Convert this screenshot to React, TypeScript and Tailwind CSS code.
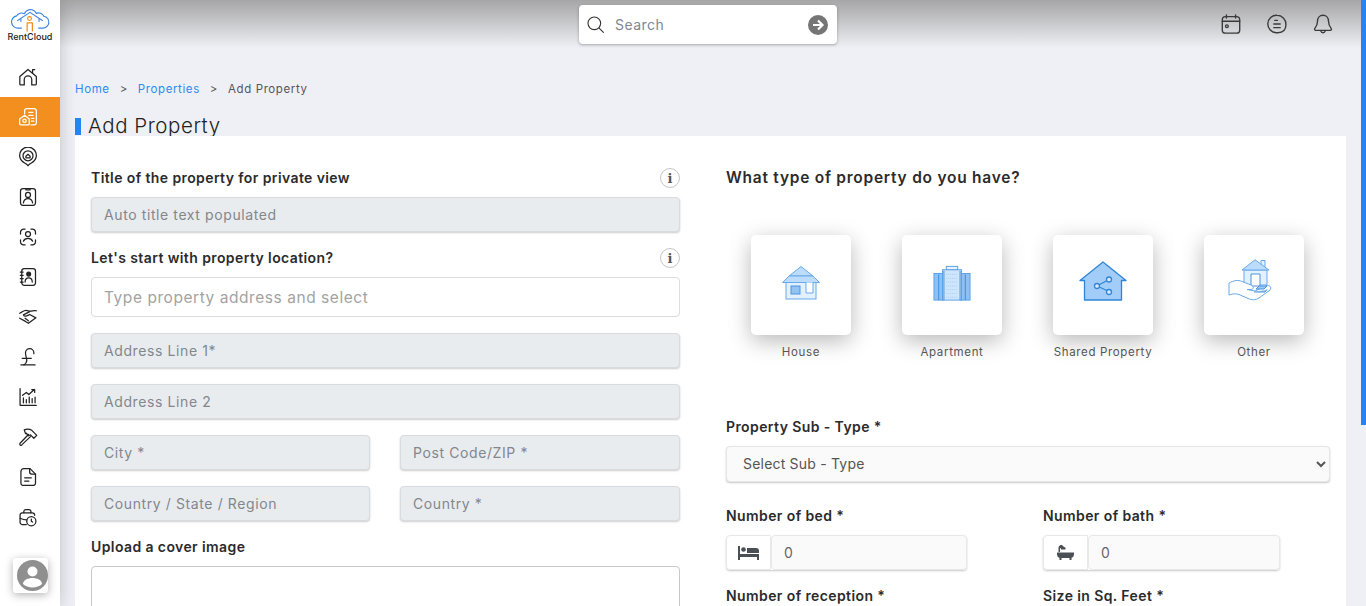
import React from "react";

const I = ({ children, size = 22, cls = "text-[#222]", sw = 1.5 }: { children: React.ReactNode; size?: number; cls?: string; sw?: number }) => (
  <svg width={size} height={size} viewBox="0 0 24 24" fill="none" stroke="currentColor" strokeWidth={sw} strokeLinecap="round" strokeLinejoin="round" className={cls}>
    {children}
  </svg>
);

const navIcons: React.ReactNode[] = [
  <><path d="M3 21.500h4.500V15a4.500 4.500 0 0 1 9 0v6.500H21a1 1 0 0 0 1-1V11.500L12 3 2.200 11.500v9a1 1 0 0 0 .8 1z" /><path d="M17.500 7V3.200H20" /></>,
  <><path d="M3 21.500h9.500a1 1 0 0 0 1-1v-6L8 10 2 14.500v6a1 1 0 0 0 1 1z" /><circle cx="7.800" cy="16.500" r="2" /><path d="M8 8V4.500A2.500 2.500 0 0 1 10.500 2H19a3 3 0 0 1 3 3v14a2.500 2.500 0 0 1-2.500 2.500h-4" /><path d="M13 6.500h5M13 10h5M16 13.500h3M16 17h3" /></>,
  <><path d="M12 22.500c-1-1.600-2.200-2.400-4-3.300a10 10 0 1 1 8 0c-1.800.9-3 1.700-4 3.300z" /><circle cx="12" cy="10.500" r="6" /><path d="M9.500 11 12 8.800l2.500 2.200v2H9.500z" /></>,
  <><rect x="3" y="2" width="18" height="20" rx="3" /><circle cx="12" cy="9.500" r="3" /><path d="M6.500 19c.5-3.500 2.700-5 5.500-5s5 1.500 5.500 5" /><path d="M9.500 2v1.500h5V2" /></>,
  <><path d="M3 8.500V6.500A4 4 0 0 1 7 2.500h1.500M15.500 2.500H17a4 4 0 0 1 4 4v2M3 15.500v2a4 4 0 0 0 4 4h1.500M21 15.500v2a4 4 0 0 1-4 4h-1.500" /><circle cx="12" cy="8.500" r="3" /><path d="M6.500 17c1-2.500 3-3.500 5.500-3.500s4.500 1 5.500 3.500" /></>,
  <><rect x="4.500" y="2" width="16.500" height="20" rx="3" /><path d="M2.800 6h3.400M2.800 10h3.400M2.800 14h3.400M2.800 18h3.400" /><circle cx="12.800" cy="8.500" r="2.300" fill="currentColor" /><path d="M8.500 18c0-3.500 1.800-5 4.300-5s4.300 1.500 4.300 5" /></>,
  <><path d="M2 7.500c3-1 4.500-3.500 7.500-3.500 2 0 3.500 1 5 1 2.500 0 5-1.500 7.500-.5" /><path d="M14 5.500 6.500 9.500c1 2 3.500 2 5.500.5l2-1 7.500 4-9 6.500-4-2.500L2 13.500" /><path d="M8.500 13.500l4 3" /></>,
  <><path d="M19 8V7a5 5 0 0 0-10 0c0 4 1.500 6 1.500 9 0 2-1 4-3.500 5.500" /><path d="M5 13.500h11" /><path d="M3.500 21.500h17" /></>,
  <><path d="M2.500 2v20h19.500" /><path d="M6.500 19v-6M10 19v-4M13.500 19v-7M17 19v-5M20.500 19v-7" /><path d="M5.500 10l4.500-3.500 3 2.500 6.500-6M16.500 3H20v3.500" /></>,
  <><path d="M12.500 9 2.500 19.500a1.500 1.500 0 0 0 0 2 1.500 1.500 0 0 0 2 0L15 11.500" /><path d="M7.500 3.500c3-1.500 6-1.500 9 .5l6 6-3.500 3.500-4-4-2.500 1-2.500-3-1 .5z" /></>,
  <><path d="M5.500 22h13a2.500 2.500 0 0 0 2.500-2.500V8.500L14.500 2H7a3.500 3.500 0 0 0-3.500 3.500v14A2.500 2.500 0 0 0 5.500 22z" /><path d="M14 2.500V6a2.500 2.500 0 0 0 2.500 2.500H21" /><path d="M8 13h8M8 17h5" /></>,
  <><path d="M10 21H5a2.500 2.500 0 0 1-2.500-2.500V9.500A2.500 2.500 0 0 1 5 7h12a3 3 0 0 1 3 3" /><path d="M7 7V5.500a2.500 2.500 0 0 1 2.500-2.500h3.500A2.500 2.500 0 0 1 15.500 5.500V7" /><path d="M2.500 13.500c3 1.500 5.500 2 8 2" /><circle cx="16" cy="17" r="5.500" /><path d="M16 14.500V17l1.500 1" /></>,
];

const Logo = () => (
  <svg width="40" height="25" viewBox="0 0 42 26" fill="none" strokeLinecap="round" strokeLinejoin="round">
    <path d="M12 21H8a6.500 6.500 0 0 1-1-12.900 6 6 0 0 1 8-2.300A8 8 0 0 1 21 1.500a7.500 7.500 0 0 1 6.500 4 6 6 0 0 1 8 3 6.300 6.300 0 0 1-1.500 12.500h-4" stroke="#3b82e8" strokeWidth="1.200" />
    <path d="M8 13 21 4.500 34 13M11.500 11.500V14M30.500 11.500V14" stroke="#3b82e8" strokeWidth="1.100" />
    <circle cx="20.500" cy="11" r="2" stroke="#f28c1e" strokeWidth="1.200" />
    <path d="M18 24v-8.500h5.500V24" stroke="#f28c1e" strokeWidth="1.300" />
  </svg>
);

const House = () => (
  <svg width="40" height="36" viewBox="0 0 40 36" fill="none" stroke="#6aa9ea" strokeWidth="1">
    <path d="M8 11 20 1.500 32 11z" fill="#bcdcfb" />
    <path d="M1.500 17.500 8 11h24l6.500 6.500z" fill="#bcdcfb" />
    <rect x="5" y="17.500" width="30" height="16.500" fill="#e3f0fd" />
    <rect x="10" y="21" width="9" height="8" fill="#93c3f3" stroke="#4d94df" />
    <path d="M25 17.500v10.500h7V17.500" fill="#fff" />
  </svg>
);

const Apartment = () => (
  <svg width="38" height="38" viewBox="0 0 40 38" fill="none" stroke="#5ba1e6" strokeWidth="1">
    <rect x="1" y="9" width="10" height="28" fill="#8ec1f3" />
    <rect x="29" y="9" width="10" height="28" fill="#8ec1f3" />
    <rect x="10" y="5" width="20" height="32" fill="#cfe5fb" />
    <rect x="14" y="1.500" width="12" height="3.500" fill="#e3f0fd" />
    <path d="M6 10v27M34 10v27M11.500 6v31M28.500 6v31" stroke="#3f8bd8" />
    <path d="M14 10h12M14 14h12M14 18h12M14 22h12M14 26h12M14 30h12M14 34h12" stroke="#a9d0f6" strokeDasharray="1 1" />
  </svg>
);

const Shared = () => (
  <svg width="48" height="40" viewBox="0 0 48 40" fill="none" stroke="#2f86d8" strokeWidth="1.300" strokeLinejoin="round" className="mb-[5px]">
    <path d="M1 19.500 24 1l23 18.500h-4.500V39h-37V19.500z" fill="#a3cdf9" />
    <path d="M18 25l12-6.500M18 25l12 5.500" />
    <circle cx="18" cy="25" r="2.500" fill="#d8eafc" />
    <circle cx="30" cy="18.500" r="2.500" fill="#d8eafc" />
    <circle cx="30" cy="31" r="2.500" fill="#d8eafc" />
  </svg>
);

const Other = () => (
  <svg width="44" height="43" viewBox="0 0 44 43" fill="none" stroke="#69a9ea" strokeWidth="1" strokeLinejoin="round" className="mb-[6px] mr-[8px]">
    <path d="M33 8V1.500h4V11z" fill="#e3f0fd" />
    <rect x="16" y="11" width="23" height="15" fill="#e3f0fd" />
    <path d="M14 11 27 .8 41 11z" fill="#bcdcfb" />
    <rect x="23" y="15" width="9" height="12" fill="#fff" stroke="#4d94df" />
    <path d="M1 24c5-2.500 9-3.500 13-1.500l9 3.500c3 1.300 3 4.500 0 4.500h-4l8 1.500 11-5c4-1.500 6 1.500 4 4l-11 8c-4 2.500-7 2-11 .5l-9-4c-3-1-6-1-10 .5z" fill="#fff" />
    <path d="M28 30h8l3-3h-8zM26 33h11l2-2.500" fill="#9ccbf7" stroke="#4d94df" />
  </svg>
);

const Info = () => (
  <span className="flex h-[20px] w-[20px] items-center justify-center rounded-full border border-[#c4c4c4] bg-white text-[13px] leading-none font-bold text-[#555] [font-family:'DejaVu_Serif',serif]">i</span>
);

const inputBase = "block w-full rounded-[4px] border px-[12px] outline-none [font-family:inherit]";

const Disabled = ({ ph, w = "w-full" }: { ph: string; w?: string }) => (
  <input
    readOnly
    placeholder={ph}
    className={`${inputBase} ${w} h-[35px] border-[#d9dcde] bg-[#e9ecef] text-[14px] tracking-[0.6px] shadow-[0_1px_2px_rgba(0,0,0,0.2)] placeholder:text-[#82878c]`}
  />
);

const Label = ({ children }: { children: React.ReactNode }) => (
  <div className="text-[14px] leading-[18px] font-semibold tracking-[0.4px] text-[#2b2b2b]">{children}</div>
);

const TypeCard = ({ name, children }: { name: string; children: React.ReactNode }) => (
  <div className="flex w-[100px] flex-col items-center">
    <div className="flex h-[100px] w-[100px] items-center justify-center rounded-[5px] bg-white pb-[4px] shadow-[0_6px_22px_rgba(0,0,0,0.28)]">{children}</div>
    <div className="mt-[10px] whitespace-nowrap text-[11.500px] leading-[14px] tracking-[0.65px] text-[#555]">{name}</div>
  </div>
);

const NumGroup = ({ children, inputW }: { children: React.ReactNode; inputW: string }) => (
  <div className="flex h-[35px] w-fit rounded-[4px] shadow-[0_1px_2px_rgba(0,0,0,0.22)]">
    <span className="flex h-full w-[45px] items-center justify-center rounded-l-[4px] border border-[#e8e8e8] bg-white text-[#4a4f55]">{children}</span>
    <input readOnly value="0" className={`h-full ${inputW} rounded-[4px] border border-[#e8e8e8] bg-[#fafafa] px-[12px] text-[14px] text-[#666] outline-none`} />
  </div>
);

export default function App() {
  return (
    <div className="flex h-[606px] w-[1366px] overflow-hidden bg-[#eff0f5] [font-family:Inter,sans-serif]">
      <aside className="relative z-10 flex h-full w-[60px] shrink-0 flex-col items-center bg-white shadow-[0_0_16px_rgba(0,0,0,0.2)]">
        <div className="flex h-[57px] w-full flex-col items-center pt-[8px]">
          <Logo />
          <div className="mt-[-1px] text-[9px] leading-[10px] font-medium text-[#222]">RentCloud</div>
        </div>
        {navIcons.map((ic, i) => (
          <div key={i} className={`flex h-[40px] w-full items-center justify-center pr-[4px] ${i === 1 ? "bg-[#f28f1f]" : ""}`}>
            <I size={20} cls={i === 1 ? "text-white" : "text-[#222]"}>{ic}</I>
          </div>
        ))}
        <div className="mt-[21px] flex h-[35px] w-[35px] items-center justify-end rounded-[3px] bg-white shadow-[0_2px_8px_rgba(0,0,0,0.3)]">
          <svg width="31" height="31" viewBox="0 0 31 31">
            <circle cx="15.500" cy="15.500" r="15.500" fill="#8f8f8f" />
            <circle cx="15.500" cy="11.500" r="5" fill="#fff" />
            <path d="M6 24c0-4 5-6 9.500-6s9.500 2 9.500 6c-2 2-6 3.500-9.500 3.500S8 26 6 24z" fill="#fff" />
          </svg>
        </div>
      </aside>

      <main className="flex h-full w-[1301px] shrink-0 flex-col">
        <header className="flex h-[48px] shrink-0 items-start bg-gradient-to-b from-[#a6a6a7] to-[#eff0f5] pt-[5px]">
          <div className="ml-[519px] flex h-[39px] w-[258px] items-center rounded-[4px] bg-white px-[7px] shadow-[0_1px_3px_rgba(0,0,0,0.3)]">
            <I size={19} cls="text-[#333]" sw={1.400}><circle cx="10.500" cy="10.500" r="8" /><path d="m16.500 16.500 5.500 5.500" /></I>
            <span className="ml-[10px] text-[14px] tracking-[0.45px] text-[#7d8795]">Search</span>
            <svg width="20" height="20" viewBox="0 0 20 20" className="ml-auto mr-[2px]">
              <circle cx="10" cy="10" r="10" fill="#757575" />
              <path d="M5 10h9M10 5.500l4.500 4.500-4.500 4.500" fill="none" stroke="#fff" strokeWidth="2.200" />
            </svg>
          </div>
          <div className="ml-[383px] flex gap-[24px] pt-[8px]">
            <I cls="text-[#3a3a3a]"><rect x="2.500" y="4" width="19" height="18" rx="3.500" /><path d="M7 2v3.500M17 2v3.500M2.500 9h19" /><circle cx="7.500" cy="14.500" r="1.500" /></I>
            <I cls="text-[#3a3a3a]"><path d="M12 2.500a9.800 9.800 0 0 1 9.800 9.800c0 6-2.500 9.200-9 9.200H11A9.500 9.500 0 0 1 12 2.500z" /><path d="M9.500 8h3M8.500 12h7M8.500 16h7" /></I>
            <I cls="text-[#3a3a3a]"><path d="M12 2.500c3.500 0 6 2.700 6 6.500 0 3.500 1 5.500 3 8 .5.800 0 2-1 2H4c-1 0-1.500-1.200-1-2 2-2.500 3-4.500 3-8 0-3.800 2.500-6.500 6-6.500z" /><path d="M9.500 19.500c.5 1.500 1.300 2 2.500 2s2-.5 2.500-2" /></I>
          </div>
        </header>

        <div className="flex min-h-0 flex-1 flex-col pl-[15px] pr-[15px]">
          <nav className="mt-[34px] flex h-[16px] items-center text-[11.500px] tracking-[0.6px] text-[#555]">
            <span className="text-[#2a8bf2]">Home</span>
            <span className="mx-[10px]">&gt;</span>
            <span className="text-[#2a8bf2]">Properties</span>
            <span className="mx-[10px]">&gt;</span>
            <span>Add Property</span>
          </nav>
          <div className="mt-[16px] flex h-[22px] shrink-0 items-start overflow-hidden">
            <span className="mt-[4px] h-[17px] w-[6px] bg-[#2284f5]" />
            <h1 className="ml-[7px] text-[20.500px] leading-[24px] font-light tracking-[0.55px] text-[#222]">Add Property</h1>
          </div>

          <section className="flex min-h-0 flex-1 overflow-hidden bg-white">
            <div className="w-[635px] shrink-0 pl-[16px] pt-[32px]">
              <div className="w-[589px]">
                <div className="flex h-[20px] items-center justify-between"><Label>Title of the property for private view</Label><Info /></div>
                <div className="mt-[9px]"><Disabled ph="Auto title text populated" /></div>
                <div className="mt-[16px] flex h-[20px] items-center justify-between"><Label>Let's start with property location?</Label><Info /></div>
                <input readOnly placeholder="Type property address and select" className={`${inputBase} mt-[9px] h-[40px] border-[#dcdcdc] bg-white text-[15.500px] tracking-[0.55px] placeholder:text-[#a3a3a3]`} />
                <div className="mt-[16px]"><Disabled ph="Address Line 1*" /></div>
                <div className="mt-[16px]"><Disabled ph="Address Line 2" /></div>
                <div className="mt-[16px] flex justify-between"><Disabled ph="City *" w="!w-[279px]" /><Disabled ph="Post Code/ZIP *" w="!w-[280px]" /></div>
                <div className="mt-[16px] flex justify-between"><Disabled ph="Country / State / Region" w="!w-[279px]" /><Disabled ph="Country *" w="!w-[280px]" /></div>
                <div className="mt-[17px]"><Label>Upload a cover image</Label></div>
                <div className="mt-[10px] h-[60px] rounded-[4px] border border-[#c9c9c9] bg-white" />
              </div>
            </div>

            <div className="w-[620px] shrink-0 pl-[16px] pt-[32px]">
              <div className="text-[15.500px] leading-[20px] font-semibold tracking-[0.75px] text-[#2b2b2b]">What type of property do you have?</div>
              <div className="mt-[47px] ml-[25px] flex gap-[51px]">
                <TypeCard name="House"><House /></TypeCard>
                <TypeCard name="Apartment"><Apartment /></TypeCard>
                <TypeCard name="Shared Property"><Shared /></TypeCard>
                <TypeCard name="Other"><Other /></TypeCard>
              </div>
              <div className="mt-[59px]"><Label>Property Sub - Type *</Label></div>
              <select className="mt-[10px] block h-[36px] w-[604px] rounded-[4px] border border-[#e6e6e6] bg-[#fafafa] pb-[1px] pl-[12px] pr-[2px] text-[14px] tracking-[0.2px] text-[#555] shadow-[0_1px_2px_rgba(0,0,0,0.22)] outline-none">
                <option>Select Sub - Type</option>
              </select>
              <div className="mt-[25px] flex">
                <div className="w-[317px]">
                  <Label>Number of bed *</Label>
                  <div className="mt-[10px]">
                    <NumGroup inputW="w-[196px]">
                      <svg width="21" height="14" viewBox="0 0 21 14" fill="currentColor"><path d="M0 0h2v8h19v6h-2v-3H2v3H0z" /><circle cx="5.500" cy="3.500" r="2.300" /><path d="M9 2h9a3 3 0 0 1 3 3v2H9z" /></svg>
                    </NumGroup>
                  </div>
                </div>
                <div className="w-[240px]">
                  <Label>Number of bath *</Label>
                  <div className="mt-[10px]">
                    <NumGroup inputW="w-[192px]">
                      <svg width="17" height="15" viewBox="0 0 17 15" fill="currentColor"><path d="M0 7.500h17v2a3.500 3.500 0 0 1-2.500 3.300V15h-2v-2h-8v2h-2v-2.200A3.500 3.500 0 0 1 0 9.500z" /><path d="M1.500 7V2.500A2.500 2.500 0 0 1 6 1l1 1 1.500.5v2H4V3.500L3.300 3c-.2 0-.3.200-.3.500V7z" /></svg>
                    </NumGroup>
                  </div>
                </div>
              </div>
              <div className="mt-[17px] flex">
                <div className="w-[317px]"><Label>Number of reception *</Label></div>
                <div className="w-[240px]"><Label>Size in Sq. Feet *</Label></div>
              </div>
            </div>
          </section>
        </div>
      </main>

      <div className="flex h-full w-[5px] shrink-0 flex-col">
        <div className="h-[425px] w-full bg-[#2284f5]" />
      </div>
    </div>
  );
}
